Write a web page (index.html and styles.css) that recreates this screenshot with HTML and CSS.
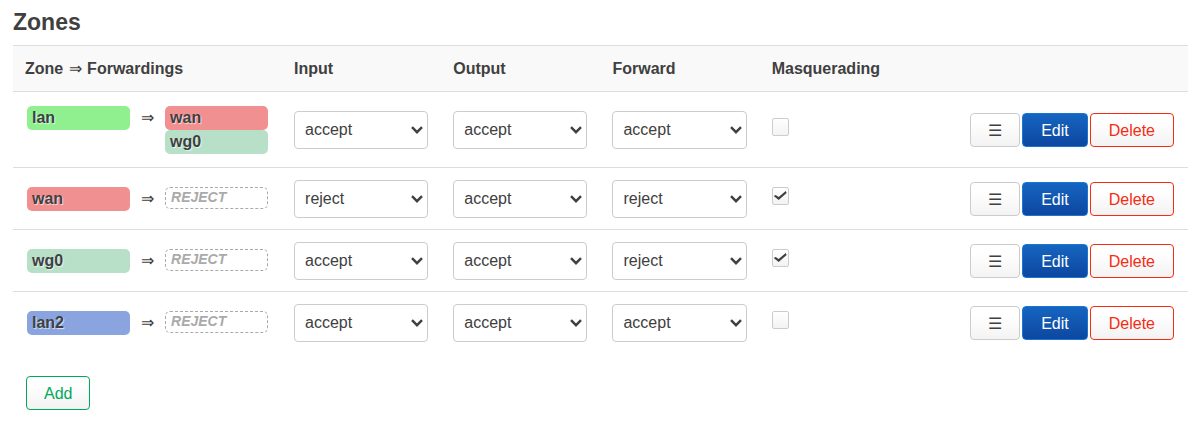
FILE: index.html
```html
<!DOCTYPE html>
<html lang="en">
<head>
<meta charset="utf-8">
<title>Zones</title>
<link rel="stylesheet" href="styles.css">
</head>
<body>
<main class="section">
  <h1 class="title">Zones</h1>
  <table class="zones">
    <thead>
      <tr>
        <th class="col-zone" scope="col">Zone <span class="arrow-inline">⇒</span> Forwardings</th>
        <th class="col-policy" scope="col">Input</th>
        <th class="col-policy" scope="col">Output</th>
        <th class="col-policy" scope="col">Forward</th>
        <th scope="col">Masquerading</th>
        <td></td>
      </tr>
    </thead>
    <tbody>
      <tr>
        <td><div class="forwards"><span class="badge lan">lan</span><span class="arrow">⇒</span><div class="targets"><span class="badge wan">wan</span><span class="badge wg0">wg0</span></div></div></td>
        <td><select class="policy" aria-label="lan input"><option selected>accept</option><option>reject</option><option>drop</option></select></td>
        <td><select class="policy" aria-label="lan output"><option selected>accept</option><option>reject</option><option>drop</option></select></td>
        <td><select class="policy" aria-label="lan forward"><option selected>accept</option><option>reject</option><option>drop</option></select></td>
        <td><input class="check" type="checkbox" aria-label="lan masquerading"></td>
        <td><div class="actions"><button class="btn drag" type="button">☰</button><button class="btn edit" type="button">Edit</button><button class="btn delete" type="button">Delete</button></div></td>
      </tr>
      <tr>
        <td><div class="forwards"><span class="badge wan">wan</span><span class="arrow">⇒</span><div class="targets"><span class="badge none">REJECT</span></div></div></td>
        <td><select class="policy" aria-label="wan input"><option>accept</option><option selected>reject</option><option>drop</option></select></td>
        <td><select class="policy" aria-label="wan output"><option selected>accept</option><option>reject</option><option>drop</option></select></td>
        <td><select class="policy" aria-label="wan forward"><option>accept</option><option selected>reject</option><option>drop</option></select></td>
        <td><input class="check" type="checkbox" aria-label="wan masquerading" checked></td>
        <td><div class="actions"><button class="btn drag" type="button">☰</button><button class="btn edit" type="button">Edit</button><button class="btn delete" type="button">Delete</button></div></td>
      </tr>
      <tr>
        <td><div class="forwards"><span class="badge wg0">wg0</span><span class="arrow">⇒</span><div class="targets"><span class="badge none">REJECT</span></div></div></td>
        <td><select class="policy" aria-label="wg0 input"><option selected>accept</option><option>reject</option><option>drop</option></select></td>
        <td><select class="policy" aria-label="wg0 output"><option selected>accept</option><option>reject</option><option>drop</option></select></td>
        <td><select class="policy" aria-label="wg0 forward"><option>accept</option><option selected>reject</option><option>drop</option></select></td>
        <td><input class="check" type="checkbox" aria-label="wg0 masquerading" checked></td>
        <td><div class="actions"><button class="btn drag" type="button">☰</button><button class="btn edit" type="button">Edit</button><button class="btn delete" type="button">Delete</button></div></td>
      </tr>
      <tr>
        <td><div class="forwards"><span class="badge lan2">lan2</span><span class="arrow">⇒</span><div class="targets"><span class="badge none">REJECT</span></div></div></td>
        <td><select class="policy" aria-label="lan2 input"><option selected>accept</option><option>reject</option><option>drop</option></select></td>
        <td><select class="policy" aria-label="lan2 output"><option selected>accept</option><option>reject</option><option>drop</option></select></td>
        <td><select class="policy" aria-label="lan2 forward"><option selected>accept</option><option>reject</option><option>drop</option></select></td>
        <td><input class="check" type="checkbox" aria-label="lan2 masquerading"></td>
        <td><div class="actions"><button class="btn drag" type="button">☰</button><button class="btn edit" type="button">Edit</button><button class="btn delete" type="button">Delete</button></div></td>
      </tr>
    </tbody>
  </table>
  <div class="footer"><button class="btn add" type="button">Add</button></div>
</main>
</body>
</html>
```

FILE: styles.css
```css
* { box-sizing: border-box; }

body {
  margin: 0;
  background: #fff;
  color: #404040;
  font: 16px/24px "Liberation Sans", Arial, sans-serif;
}

.section { padding: 8px 9px 12px 13px; }

.title {
  margin: 0 0 9px;
  font-size: 23px;
  line-height: 28px;
}

.zones {
  width: 100%;
  border-spacing: 0;
  border-top: 1px solid #ddd;
  table-layout: fixed;
}

.zones th,
.zones td {
  padding: 12px 12px 11px;
  border-bottom: 1px solid #ddd;
  text-align: left;
  vertical-align: middle;
}

.zones thead th,
.zones thead td {
  padding: 11px 12px;
  background: #f9f9f9;
  line-height: 23px;
}

.zones tbody tr:last-child td { border-bottom: 0; }
.zones tbody td:last-child { padding-right: 14px; }

.col-zone { width: 22.9%; }
.col-policy { width: 13.55%; }

.arrow-inline {
  padding: 0 1px;
  font-weight: normal;
}

.forwards {
  display: grid;
  grid-template-columns: 1fr 35px 1fr;
  align-items: start;
  padding: 2px;
}

.arrow { text-align: center; }

.badge {
  display: block;
  height: 24px;
  padding: 0 5px;
  border-radius: 5px;
  font-weight: bold;
  text-shadow: 1px 1px 1px rgb(255 255 255 / 70%);
}

.lan { background: #90f090; }
.wan { background: #f09090; }
.wg0 { background: #b8e0c8; }
.lan2 { background: #8aa4e0; }

.none {
  height: 22px;
  border: 1px dashed #aaa;
  color: #aaa;
  font-size: 14px;
  font-style: italic;
  line-height: 19px;
}

.policy {
  appearance: none;
  display: block;
  width: calc(100% - 1px);
  height: 38px;
  padding: 0 20px 0 10px;
  border: 1px solid #ccc;
  border-radius: 4px;
  background: #fff url("data:image/svg+xml,%3Csvg xmlns='http://www.w3.org/2000/svg' width='12' height='8'%3E%3Cpath d='M1 1.2l5 5 5-5' fill='none' stroke='%23404040' stroke-width='2.4'/%3E%3C/svg%3E") no-repeat right 4px center;
  color: #404040;
  font: inherit;
}

.check {
  appearance: none;
  display: block;
  width: 17px;
  height: 18px;
  margin: 0 0 6px;
  padding: 3px 1px;
  border: 1px solid #ccc;
  border-radius: 2px;
  background: linear-gradient(#fff, #f3f3f3);
}

.check:checked::before {
  content: "";
  display: block;
  width: 13px;
  height: 10px;
  background: #404040;
  clip-path: polygon(0 5px, 2px 4px, 5px 6px, 12px 0, 13px 2px, 5px 9px);
}

.actions {
  display: flex;
  justify-content: flex-end;
  gap: 2px;
}

.btn {
  height: 34px;
  padding: 1px 18px 0;
  border: 1px solid #ccc;
  border-radius: 4px;
  background: linear-gradient(#fff, #fff 25%, #f3f3f3);
  color: #404040;
  font: inherit;
}

.drag { padding: 1px 17px 0; }

.edit {
  border-color: #1976d2;
  background: linear-gradient(#1565c0, #0d47a1);
  color: #fff;
}

.delete {
  border-color: #f62b12;
  color: #f62b12;
}

.add {
  padding: 1px 17px 0;
  border-color: #00a85a;
  color: #00a85a;
}

.footer { padding: 23px 13px 0; }
```
